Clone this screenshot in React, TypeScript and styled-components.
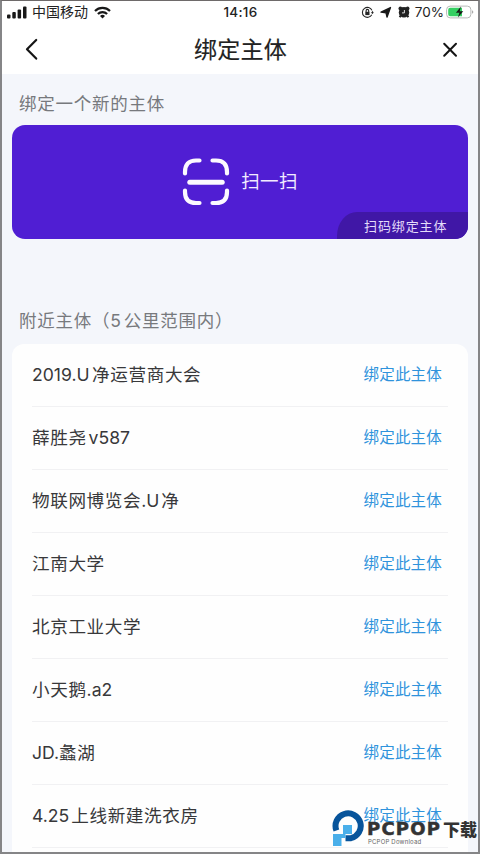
import React from 'react';
import styled, { createGlobalStyle } from 'styled-components';

const Global = createGlobalStyle`
  * { box-sizing: border-box; }
  body {
    margin: 0;
    overflow: hidden;
    font-family: Inter, "Noto Sans CJK SC", sans-serif;
  }
`;

const Screen = styled.div`
  position: relative;
  width: 480px;
  height: 854px;
  overflow: hidden;
  display: flex;
  flex-direction: column;
  background: #f4f6fb;
  border: 2px solid #858587;
  border-top-width: 1px;
  border-top-color: #6e6a6a;
`;

const StatusBar = styled.header`
  flex: none;
  height: 22px;
  display: grid;
  grid-template-columns: 1fr auto 1fr;
  align-items: center;
  padding: 0 4px 0 5px;
  background: #fff;
  color: #222;
`;

const StatusGroup = styled.div<{ $end?: boolean }>`
  display: flex;
  align-items: center;
  justify-content: ${(p) => (p.$end ? 'flex-end' : 'flex-start')};
  height: 21px;
`;

const Carrier = styled.span`
  margin: 0 6px 0 5px;
  font-size: 14px;
  line-height: 20px;
  height: 21px;
`;

const Clock = styled.time`
  font-size: 13.5px;
  line-height: 21px;
  font-weight: 500;
  letter-spacing: 0.3px;
`;

const Percent = styled.span`
  margin: 0 2px 0 5px;
  font-size: 13.5px;
  line-height: 21px;
`;

const NavBar = styled.nav`
  flex: none;
  height: 51px;
  display: flex;
  align-items: center;
  justify-content: space-between;
  padding: 0 18px 0 21px;
  background: #fff;
`;

const NavButton = styled.button`
  display: flex;
  padding: 0;
  border: 0;
  background: none;
`;

const Title = styled.h1`
  margin: 0 2px 0 0;
  padding-top: 3px;
  font-size: 23px;
  line-height: 48px;
  font-weight: 400;
  letter-spacing: 0.3px;
  color: #222;
  -webkit-text-stroke: 0.15px #222;
`;

const Content = styled.main`
  flex: 1;
  min-height: 0;
  display: flex;
  flex-direction: column;
  padding: 17px 10px 0;
`;

const SectionLabel = styled.h2`
  flex: none;
  margin: 0;
  padding-left: 7px;
  height: 34px;
  font-size: 17.5px;
  line-height: 25px;
  font-weight: 400;
  letter-spacing: 0.75px;
  color: #77797d;
`;

const ScanCard = styled.section`
  flex: none;
  display: flex;
  flex-direction: column;
  height: 114px;
  margin-bottom: 69px;
  border-radius: 13px;
  overflow: hidden;
  background: #501ed3;
  color: #fff;
`;

const ScanAction = styled.div`
  flex: 1;
  display: flex;
  align-items: center;
  justify-content: center;
  gap: 11px;
  padding-top: 26px;
  font-size: 18.5px;
  letter-spacing: 0.4px;
  color: #f2ebff;
`;

const ScanLabel = styled.span`
  padding-bottom: 3px;
`;

const ScanHint = styled.div`
  align-self: flex-end;
  width: 131px;
  height: 27px;
  padding-left: 27px;
  border-top-left-radius: 20px 24px;
  background: #4017a6;
  font-size: 13px;
  line-height: 29px;
  letter-spacing: 0.9px;
  color: #e4dcfa;
`;

const List = styled.ul`
  flex: none;
  min-height: 520px;
  margin: 2px 0 0;
  padding: 0 20px;
  list-style: none;
  border-radius: 12px 12px 0 0;
  background: #fefefe;
`;

const Row = styled.li`
  display: flex;
  justify-content: space-between;
  height: 63px;
  padding-right: 6px;
  border-bottom: 1px solid #f1f1f3;
  line-height: 62px;
`;

const Name = styled.span`
  font-size: 17.6px;
  letter-spacing: 0.6px;
  color: #38383a;
`;

const Latin = styled.span<{ $before?: number; $after?: number; $track?: number }>`
  margin-left: ${(p) => p.$before ?? 0}px;
  margin-right: ${(p) => p.$after ?? 0}px;
  letter-spacing: ${(p) => p.$track ?? 0}px;
`;

const StatusGap = styled.span`
  width: 6px;
`;

const BindLink = styled.a`
  font-size: 15.5px;
  color: #2f93dc;
  letter-spacing: 0.2px;
`;

const Watermark = styled.aside`
  position: absolute;
  left: 330px;
  top: 809px;
  display: flex;
  align-items: flex-start;
`;

const BrandText = styled.div`
  display: flex;
  flex-direction: column;
  margin-left: 2px;
  padding-top: 9px;
`;

const BrandName = styled.div`
  display: flex;
  align-items: center;
  height: 19px;
  color: #333;
  font-weight: 800;
`;

const BrandCn = styled.span`
  font-family: "Noto Sans CJK SC", sans-serif;
  font-size: 17px;
  line-height: 19px;
  white-space: nowrap;
`;

const BrandLatin = styled.span`
  width: 76px;
  font-family: "DejaVu Sans", sans-serif;
  font-size: 18px;
  line-height: 19px;
  letter-spacing: 1.2px;
  -webkit-text-stroke: 0.5px #333;
`;

const BrandSub = styled.span`
  padding-left: 1px;
  font-size: 6px;
  line-height: 8px;
  letter-spacing: 0.2px;
  color: #666;
`;

type Part = string | { text: string; before?: number; after?: number; track?: number };

const rows: Part[][] = [
  [{ text: '2019.U', after: 2.5 }, '净运营商大会'],
  ['薛胜尧', { text: 'v587', before: 2 }],
  ['物联网博览会', { text: '.U', after: 2 }, '净'],
  ['江南大学'],
  ['北京工业大学'],
  ['小天鹅', { text: '.a2' }],
  [{ text: 'JD.' }, '蠡湖'],
  [{ text: '4.25', after: 2 }, '上线新建洗衣房'],
];

const SignalIcon = () => (
  <svg width="20" height="13" viewBox="0 0 20 13" fill="#181818">
    <rect x="0" y="8.5" width="3.5" height="4" rx="1" />
    <rect x="5.3" y="6" width="3.5" height="6.5" rx="1" />
    <rect x="10.6" y="3.5" width="3.5" height="9" rx="1" />
    <rect x="16" y="0.5" width="3.5" height="12" rx="1" />
  </svg>
);

const WifiIcon = () => (
  <svg width="17" height="13" viewBox="0 0 17 13" fill="none" stroke="#181818" strokeWidth="2.2">
    <path d="M1 5a10.6 10.6 0 0 1 15 0M3.9 8a6.5 6.5 0 0 1 9.2 0" />
    <path d="M6 10.1a3.5 3.5 0 0 1 5 0L8.5 12.6z" fill="#181818" stroke="none" />
  </svg>
);

const LockIcon = () => (
  <svg width="13" height="13" viewBox="0 0 13 13" fill="none" stroke="#252525" strokeWidth="1.1">
    <path d="M10.8 8.8A5 5 0 1 1 11 4.4M11.5 5.2v2" />
    <path d="m9.8 6.3 1.7 1.8 1.4-1.8z" fill="#252525" stroke="none" />
    <rect x="4.3" y="5.8" width="4.2" height="3.3" fill="#252525" stroke="none" />
    <path d="M5.1 6V4.7a1.3 1.3 0 0 1 2.6 0V6" />
  </svg>
);

const LocationIcon = () => (
  <svg width="12" height="12" viewBox="0 0 12 12" fill="#181818">
    <path d="M1 6.2 10.5 1.5 7 11.2 6 6.8z" stroke="#181818" strokeWidth="1.3" strokeLinejoin="round" />
  </svg>
);

const AlarmIcon = () => (
  <svg width="12" height="12" viewBox="0 0 12 12" fill="#222">
    <circle cx="6" cy="6.4" r="5.2" />
    <circle cx="2.4" cy="2.4" r="1.9" />
    <circle cx="9.6" cy="2.4" r="1.9" />
    <path d="m2.7 9.5-1 1.8M9.3 9.5l1 1.8M4 2.2h4" stroke="#222" strokeWidth="2" />
    <path d="M6.4 4v2.9H4" fill="none" stroke="#ddd" strokeWidth="1" />
  </svg>
);

const BatteryIcon = () => (
  <svg width="28" height="14" viewBox="0 0 28 14">
    <rect x=".6" y="1.1" width="24.3" height="11.8" rx="3.6" fill="#fff" stroke="#b7b9b8" />
    <path d="M4.2 2.7H16v8.6H4.2a2 2 0 0 1-2-2V4.7a2 2 0 0 1 2-2z" fill="#35cf62" />
    <path d="M26 5.2c1.8.6 1.8 3 0 3.6z" fill="#aaa" />
    <path d="m15 1.5-5.1 6.2h3.5l-1.5 4.8 5.4-6.3h-3.6z" fill="#171b18" />
  </svg>
);

const BackIcon = () => (
  <svg width="20" height="24" viewBox="0 0 20 24" fill="none" stroke="#151515" strokeWidth="2.2" strokeLinecap="round" strokeLinejoin="round">
    <path d="M13.2 3 4 12.3l9.2 9.3" />
  </svg>
);

const CloseIcon = () => (
  <svg width="20" height="20" viewBox="0 0 20 20" fill="none" stroke="#151515" strokeWidth="2" strokeLinecap="round">
    <path d="m4.2 4.8 11.8 12M16 4.8l-11.8 12" />
  </svg>
);

const ScanIcon = () => (
  <svg width="48" height="50" viewBox="0 0 48 50" fill="none" stroke="#fcf9ff" strokeWidth="4.2" strokeLinecap="round">
    <path d="M3 16.5V15Q3 3.5 14 3.5h3.5M30.5 3.5H34Q45 3.5 45 15v1.5M3 33.5V35q0 11 11 11h3.5M30.5 46H34q11 0 11-11v-1.5" />
    <path d="M7.8 25.200h32.400" strokeWidth="5" />
  </svg>
);

const BrandMark = () => (
  <svg width="33" height="37" viewBox="0 0 33 37" fill="none">
    <path d="M4.400 20.500A12.600 12.600 0 1 1 19 28.200h-5.500" stroke="#07549b" strokeWidth="6" />
    <path d="M11 15h9v9h-6.500v4H9.500v8H1V24h10z" fill="#4aafea" />
  </svg>
);

export default function App() {
  return (
    <>
      <Global />
      <Screen>
        <StatusBar>
          <StatusGroup>
            <SignalIcon />
            <Carrier>中国移动</Carrier>
            <WifiIcon />
          </StatusGroup>
          <Clock>14:16</Clock>
          <StatusGroup $end>
            <LockIcon />
            <StatusGap />
            <LocationIcon />
            <StatusGap />
            <AlarmIcon />
            <Percent>70%</Percent>
            <BatteryIcon />
          </StatusGroup>
        </StatusBar>
        <NavBar>
          <NavButton aria-label="返回"><BackIcon /></NavButton>
          <Title>绑定主体</Title>
          <NavButton aria-label="关闭"><CloseIcon /></NavButton>
        </NavBar>
        <Content>
          <SectionLabel>绑定一个新的主体</SectionLabel>
          <ScanCard>
            <ScanAction><ScanIcon /><ScanLabel>扫一扫</ScanLabel></ScanAction>
            <ScanHint>扫码绑定主体</ScanHint>
          </ScanCard>
          <SectionLabel>附近主体（5<Latin $before={2} />公里范围内）</SectionLabel>
          <List>
            {rows.map((parts, i) => (
              <Row key={i}>
                <Name>
                  {parts.map((part, j) =>
                    typeof part === 'string' ? part : (
                      <Latin key={j} $before={part.before} $after={part.after} $track={part.track}>{part.text}</Latin>
                    ),
                  )}
                </Name>
                <BindLink>绑定此主体</BindLink>
              </Row>
            ))}
          </List>
        </Content>
        <Watermark>
          <BrandMark />
          <BrandText>
            <BrandName><BrandLatin>PCPOP</BrandLatin><BrandCn>下载</BrandCn></BrandName>
            <BrandSub>PCPOP Download</BrandSub>
          </BrandText>
        </Watermark>
      </Screen>
    </>
  );
}
